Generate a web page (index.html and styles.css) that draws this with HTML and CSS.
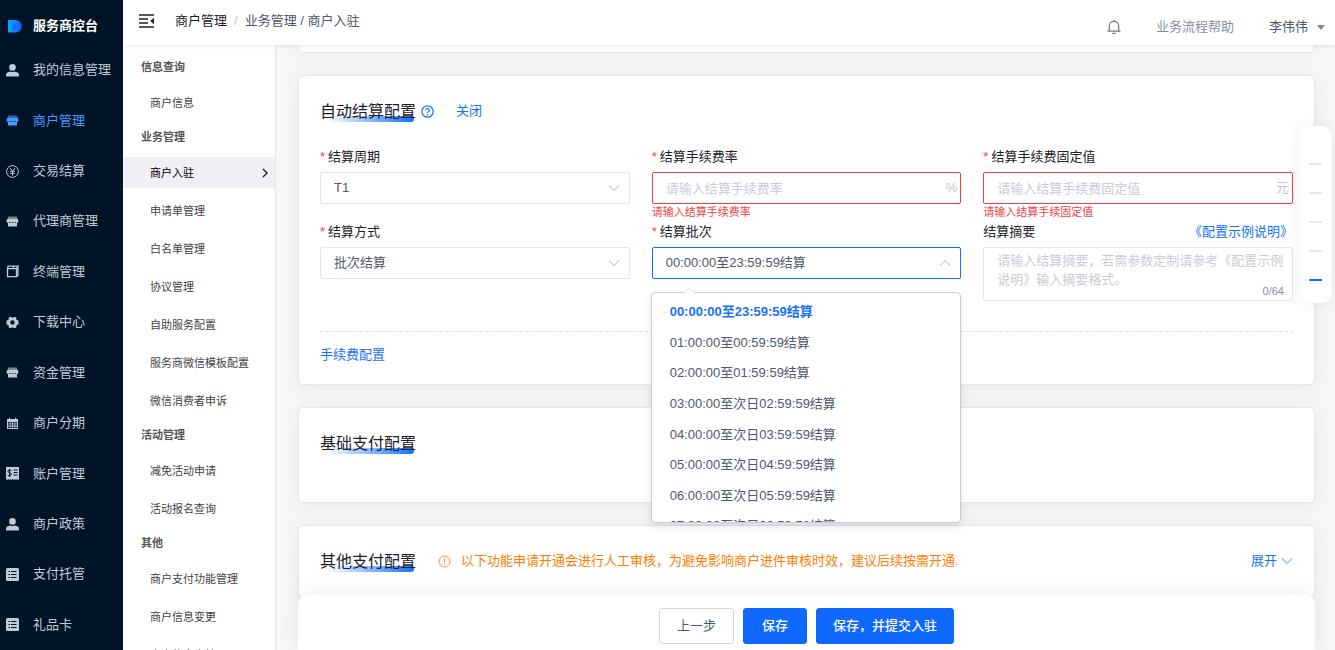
FILE: index.html
```html
<!DOCTYPE html>
<html lang="zh-CN">
<head>
<meta charset="utf-8">
<title>商户入驻 - 服务商控台</title>
<link rel="stylesheet" href="styles.css">
</head>
<body>
<svg class="sprite" aria-hidden="true">
  <symbol id="i-user" viewBox="0 0 13 13"><circle cx="6.500" cy="3.400" r="3.300"/><path d="M0 12.600V11C0 8.800 2 8 4.500 7.600Q6.500 8.600 8.500 7.600C11 8 13 8.800 13 11v1.600z"/></symbol>
  <symbol id="i-shop" viewBox="0 0 13 13"><path opacity=".6" d="M2 1.500h9v2H2z"/><path fill-rule="evenodd" d="M1.500 3.500h10l1 2.500v1l-1.500 1v3.500H2V8L.5 7V6zM3.300 7v1h1.200V7zm2.600 0v1h1.200V7zm2.600 0v1h1.200V7z"/></symbol>
  <symbol id="i-yen" viewBox="0 0 13 13"><g fill="none" stroke="currentColor"><circle cx="6.500" cy="6.500" r="5.900"/><path d="M4 3l2.500 3L9 3M6.500 6v4.500M4.200 6.300h4.600M4.200 8.300h4.600"/></g></symbol>
  <symbol id="i-box" viewBox="0 0 13 13"><path fill="none" stroke="currentColor" stroke-width="1.300" d="M1.500 3.700h9v8h-9zM1.500 3.700L2 1.200h10L10.500 3.700M12 1.200v9l-1.500 1.500M8 1.200L7 3.500"/></symbol>
  <symbol id="i-gear" viewBox="0 0 13 13"><path fill-rule="evenodd" d="M4.300.8L6.500 1.700 8.700.8l1.700 1-.2 1.700 2.300 1.300v3.400l-2.300 1.300.2 1.700-1.700 1-2.200-.9-2.200.9-1.700-1 .2-1.700L.5 8.200V4.800l2.300-1.300-.2-1.700zM6.500 4.200a2.300 2.300 0 1 0 0 4.600 2.300 2.300 0 0 0 0-4.600z"/></symbol>
  <symbol id="i-cal" viewBox="0 0 13 13"><path fill-rule="evenodd" d="M1 2h2V.8h1V2h5V.8h1V2h2v10H1zM2 5v1.400h1.700V5zm2.400 0v1.400H6V5zm2.400 0v1.400h1.700V5zm2.500 0v1.400H11V5zM2 7.200v1.400h1.700V7.200zm2.400 0v1.400H6V7.200zm2.400 0v1.400h1.700V7.200zm2.500 0v1.400H11V7.200zM2 9.500v1.400h1.700V9.500zm2.400 0v1.400H6V9.500zm2.400 0v1.400h1.700V9.500zm2.500 0v1.400H11V9.500z"/></symbol>
  <symbol id="i-bill" viewBox="0 0 13 13"><path d="M0 0h13v12l-1 1-1-1-1 1-1-1-1 1-1.500-1-1 1-1-1-1 1-1-1-1 1-1.500-1z"/><path fill="none" stroke="#001428" d="M5.500 3.700Q4.700 2.900 3.500 3 2 3.200 2 4.300t1.700 1.500T5.400 7.300 3.700 8.600 1.600 7.900M3.600 2v8M7.500 3h4M7.500 5.500h4M7.500 8h4"/></symbol>
  <symbol id="i-list" viewBox="0 0 13 13"><rect width="13" height="13" rx="1.500"/><path stroke="#001428" d="M2.500 3.500H4M5 3.500h5.500M2.500 6.500H4M5 6.500h5.500M2.500 9.500H4M5 9.500h5.500"/></symbol>
  <symbol id="i-down" viewBox="0 0 12 8"><path fill="none" stroke="currentColor" stroke-width="1.100" d="M1 1.500l5 5 5-5"/></symbol>
</svg>
<div class="app">
  <aside class="side">
    <div class="brand">
      <svg class="brand-logo" viewBox="0 0 14 13"><defs><linearGradient id="lg"><stop offset="0" stop-color="#0aa5ff"/><stop offset=".45" stop-color="#108cff"/><stop offset="1" stop-color="#1a4dff"/></linearGradient></defs><path fill="url(#lg)" d="M0 0h7.500a6.300 6.300 0 0 1 0 12.600H0z"/><path fill="#0a50ea" d="M4.500 3.200l4.500 3-4.500 6.400z" opacity=".55"/></svg>
      <span>服务商控台</span>
    </div>
    <nav class="side-nav" aria-label="主导航">
      <a href="#"><svg><use href="#i-user"/></svg>我的信息管理</a>
      <a href="#" class="on"><svg><use href="#i-shop"/></svg>商户管理</a>
      <a href="#"><svg><use href="#i-yen"/></svg>交易结算</a>
      <a href="#"><svg><use href="#i-shop"/></svg>代理商管理</a>
      <a href="#"><svg><use href="#i-box"/></svg>终端管理</a>
      <a href="#"><svg><use href="#i-gear"/></svg>下载中心</a>
      <a href="#"><svg><use href="#i-shop"/></svg>资金管理</a>
      <a href="#"><svg><use href="#i-cal"/></svg>商户分期</a>
      <a href="#"><svg><use href="#i-bill"/></svg>账户管理</a>
      <a href="#"><svg><use href="#i-user"/></svg>商户政策</a>
      <a href="#"><svg><use href="#i-list"/></svg>支付托管</a>
      <a href="#"><svg><use href="#i-list"/></svg>礼品卡</a>
    </nav>
  </aside>
  <div class="page">
    <header class="top">
      <button class="fold" type="button" aria-label="收起菜单"><svg viewBox="0 0 15 14"><path stroke="#1d2129" stroke-width="1.300" d="M0 1h15M0 5h9M0 9h9M0 13h15"/><path fill="#1d2129" d="M15 3.800v6.400L11.200 7z"/></svg></button>
      <nav class="crumbs" aria-label="面包屑"><a href="#">商户管理</a><i>/</i><span>业务管理 / 商户入驻</span></nav>
      <div class="tools">
        <button class="bell" type="button" aria-label="通知"><svg viewBox="0 0 14 14"><path fill="none" stroke="#777" stroke-width="1.200" d="M0.500 11.200h13M2.300 11V6a4.700 4.700 0 0 1 9.400 0v5M7 0v1.500M5.300 13.300h3.400"/></svg></button>
        <a class="help" href="#">业务流程帮助</a>
        <button class="who" type="button">李伟伟<svg viewBox="0 0 8 5"><path fill="#7d8592" d="M0 0h8L4 5z"/></svg></button>
      </div>
    </header>
    <div class="body">
      <nav class="sub" aria-label="商户管理">
        <h2>信息查询</h2>
        <a href="#">商户信息</a>
        <h2>业务管理</h2>
        <a href="#" class="on">商户入驻<svg viewBox="0 0 6 10"><path fill="none" stroke="#1d2129" stroke-width="1.400" d="M1 1l4 4-4 4"/></svg></a>
        <a href="#">申请单管理</a>
        <a href="#">白名单管理</a>
        <a href="#">协议管理</a>
        <a href="#">自助服务配置</a>
        <a href="#">服务商微信模板配置</a>
        <a href="#">微信消费者申诉</a>
        <h2>活动管理</h2>
        <a href="#">减免活动申请</a>
        <a href="#">活动报名查询</a>
        <h2>其他</h2>
        <a href="#">商户支付功能管理</a>
        <a href="#">商户信息变更</a>
        <a href="#">商户信息审核</a>
      </nav>
      <main class="main">
        <section class="card card-tail"></section>
        <section class="card">
          <div class="card-head">
            <h3>自动结算配置</h3>
            <svg class="q" viewBox="0 0 13 13"><g fill="none" stroke="#1670ff" stroke-width="1.200"><circle cx="6.500" cy="6.500" r="5.700"/><path d="M4.700 5.300a1.800 1.800 0 1 1 2.700 1.500q-.9.500-.9 1.200M6.500 9v1.200"/></g></svg>
            <a class="toggle" href="#">关闭</a>
          </div>
          <form class="form">
            <div class="item">
              <label for="cycle" class="req">结算周期</label>
              <div class="field"><select id="cycle"><option>T1</option></select><svg class="chev"><use href="#i-down"/></svg></div>
            </div>
            <div class="item">
              <label for="rate" class="req">结算手续费率</label>
              <div class="field bad"><input id="rate" type="text" placeholder="请输入结算手续费率"><span class="unit">%</span></div>
              <p class="err">请输入结算手续费率</p>
            </div>
            <div class="item">
              <label for="fixed" class="req">结算手续费固定值</label>
              <div class="field bad"><input id="fixed" type="text" placeholder="请输入结算手续费固定值"><span class="unit">元</span></div>
              <p class="err">请输入结算手续固定值</p>
            </div>
            <div class="item">
              <label for="mode" class="req">结算方式</label>
              <div class="field"><select id="mode"><option>批次结算</option></select><svg class="chev"><use href="#i-down"/></svg></div>
            </div>
            <div class="item">
              <label for="batch" class="req">结算批次</label>
              <div class="field open"><select id="batch"><option>00:00:00至23:59:59结算</option></select><svg class="chev"><use href="#i-down"/></svg></div>
              <div class="menu">
                <div class="menu-view">
                  <ul role="listbox" aria-label="结算批次">
                    <li role="option" aria-selected="true">00:00:00至23:59:59结算</li>
                    <li role="option">01:00:00至00:59:59结算</li>
                    <li role="option">02:00:00至01:59:59结算</li>
                    <li role="option">03:00:00至次日02:59:59结算</li>
                    <li role="option">04:00:00至次日03:59:59结算</li>
                    <li role="option">05:00:00至次日04:59:59结算</li>
                    <li role="option">06:00:00至次日05:59:59结算</li>
                    <li role="option">07:00:00至次日06:59:59结算</li>
                  </ul>
                </div>
              </div>
            </div>
            <div class="item">
              <div class="label-row"><label for="memo">结算摘要</label><a href="#">《配置示例说明》</a></div>
              <div class="field area"><textarea id="memo" rows="2" placeholder="请输入结算摘要，若需参数定制请参考《配置示例说明》输入摘要格式。"></textarea><span class="count">0/64</span></div>
            </div>
          </form>
          <div class="more"><a href="#">手续费配置</a></div>
        </section>
        <section class="card card-base">
          <div class="card-head"><h3>基础支付配置</h3></div>
        </section>
        <section class="card card-other">
          <div class="card-head">
            <h3>其他支付配置</h3>
            <p class="warn"><svg viewBox="0 0 13 13"><g fill="none" stroke="#ff8a3c"><circle cx="6.500" cy="6.500" r="5.500"/><path d="M6.500 3.300v4M6.500 8.500v1.200"/></g></svg>以下功能申请开通会进行人工审核，为避免影响商户进件审核时效，建议后续按需开通.</p>
            <a class="expand" href="#">展开<svg><use href="#i-down"/></svg></a>
          </div>
        </section>
        <footer class="bar">
          <button type="button" class="btn">上一步</button>
          <button type="button" class="btn primary">保存</button>
          <button type="button" class="btn primary">保存，并提交入驻</button>
        </footer>
        <nav class="anchors" aria-label="页内导航">
          <a href="#" aria-label="第1节"></a><a href="#" aria-label="第2节"></a><a href="#" aria-label="第3节"></a><a href="#" aria-label="第4节"></a><a href="#" class="on" aria-label="第5节"></a>
        </nav>
      </main>
    </div>
  </div>
</div>
</body>
</html>
```
FILE: styles.css
```css
* { box-sizing: border-box; }
body, h2, h3, p, ul { margin: 0; padding: 0; }
body { font: 13px/22px "Liberation Sans", "Noto Sans CJK SC", sans-serif; color: #1d2129; }
a { color: #1670ff; text-decoration: none; }
button, input, select, textarea { font: inherit; color: inherit; }
button { border: 0; padding: 0; background: none; cursor: pointer; }
svg { display: block; flex: none; }
.sprite { position: absolute; width: 0; height: 0; }

.app { display: flex; height: 100vh; overflow: hidden; }

.side { flex: none; width: 123px; display: flex; flex-direction: column; background: #001428; }
.brand { height: 45px; padding: 7px 0 0 8px; display: flex; align-items: center; gap: 11px; color: #fff; font-weight: 700; white-space: nowrap; }
.brand-logo { width: 14px; height: 13px; }
.side-nav { flex: 1; display: flex; flex-direction: column; }
.side-nav a { flex: 1; display: flex; align-items: center; gap: 14px; padding-left: 6px; color: #bfcbd9; white-space: nowrap; }
.side-nav svg { width: 13px; height: 13px; fill: currentColor; }
.side-nav .on { color: #409eff; }

.page { flex: 1; min-width: 0; display: flex; flex-direction: column; }
.top { position: relative; z-index: 20; flex: none; height: 45px; display: flex; padding: 0 10px 0 16px; background: #fff; box-shadow: 0 1px 4px rgba(0, 21, 41, .1); }
.fold, .crumbs { height: 42px; }
.fold svg { width: 15px; height: 14px; }
.crumbs { display: flex; align-items: center; margin-left: 21px; color: #4e5969; }
.crumbs a { color: #1d2129; }
.crumbs i { margin: 0 7px; color: #c0c4cc; font-style: normal; }
.tools { margin-left: auto; padding-top: 9px; display: flex; align-items: center; gap: 35px; }
.bell svg { width: 14px; height: 14px; }
.help { color: #86909c; }
.who { display: flex; align-items: center; gap: 9px; color: #4e5969; }
.who svg { width: 8px; height: 5px; }

.body { flex: 1; min-height: 0; display: flex; }
.sub { flex: none; width: 153px; padding-top: 10px; display: flex; flex-direction: column; gap: 7px; overflow: hidden; border-right: 1px solid #e5e6eb; background: #fff; font-size: 11px; }
.sub h2 { flex: none; padding-left: 18px; font-size: 11px; line-height: 25px; font-weight: 700; color: #555; }
.sub a { flex: none; display: flex; justify-content: space-between; align-items: center; height: 31px; padding: 0 7px 0 27px; color: #444; }
.sub .on { background: #f0eff5; color: #000; }
.sub svg { width: 6px; height: 10px; }

.main { position: relative; flex: 1; min-width: 0; display: flex; flex-direction: column; gap: 22px; padding: 0 20px 0 22px; overflow: hidden; background: #f7f7f7; }
.card { flex: none; padding: 25px 21px 18px; border: 1px solid #e5e6eb; border-radius: 5px; background: #fff; box-shadow: 0 2px 20px rgba(30, 50, 60, .08); }
.card-tail { padding: 7px 0 0; border-top: 0; border-radius: 0 0 5px 5px; }
.card-base { padding-bottom: 47px; }
.card-other { padding-bottom: 24px; }
.card-head { display: flex; align-items: flex-start; line-height: 20px; }
.card-head h3 { position: relative; z-index: 0; font-size: 16px; line-height: 22px; font-weight: 400; }
.card-head h3::after { content: ""; position: absolute; z-index: -1; left: 6px; right: 2px; bottom: 1px; height: 6px; border-radius: 0 2px 3px 0; background: linear-gradient(90deg, rgba(22, 112, 255, 0), #1670ff); }
.q { width: 13px; height: 13px; margin: 4px 0 0 5px; }
.toggle { margin-left: 22px; }

.form { display: grid; grid-template-columns: repeat(3, minmax(0, 1fr)); column-gap: 22px; margin-top: 22px; line-height: 24px; }
.item label { display: block; }
.item { position: relative; min-height: 75px; }
.req::before { content: "*"; margin-right: 3px; color: #f53f3f; }
.label-row { display: flex; justify-content: space-between; }
.field { position: relative; display: flex; align-items: center; height: 32px; margin-top: 3px; border: 1px solid #e5e6eb; border-radius: 2px; background: #fff; color: #4e5969; }
.field select, .field input { flex: 1; min-width: 0; height: 100%; padding: 0 13px; border: 0; outline: 0; background: none; appearance: none; }
.field ::placeholder { color: #c9cdd4; opacity: 1; }
.bad { border-color: #f53f3f; }
.open { border-color: #1670ff; }
.chev { position: absolute; right: 9px; width: 12px; height: 8px; color: #c9cdd4; pointer-events: none; }
.open .chev { transform: rotate(180deg); }
.unit { padding-right: 3px; color: #c0c4cc; }
.err { font-size: 11px; line-height: 16px; color: #f53f3f; }
.area { height: auto; }
.area textarea { flex: 1; min-width: 0; height: 52px; padding: 3px 6px 3px 13px; border: 0; outline: 0; line-height: 19px; resize: none; background: none; overflow: hidden; }
.count { position: absolute; right: 8px; bottom: 1px; font-size: 11px; line-height: 16px; color: #86909c; }

.menu { position: absolute; z-index: 5; top: 72px; left: -1px; right: 0; border: 1px solid #c9cdd4; border-radius: 4px; background: #fff; box-shadow: 0 4px 10px rgba(0, 0, 0, .1); }
.menu::before { content: ""; position: absolute; top: -4px; left: 33px; width: 8px; height: 8px; background: #fff; border: solid #e5e6eb; border-width: 1px 0 0 1px; transform: rotate(45deg); }
.menu-view { position: relative; height: 229px; padding-top: 4px; overflow: hidden; }
.menu ul { display: flex; flex-direction: column; height: 245px; list-style: none; line-height: 30px; }
.menu li { flex: 1; padding-left: 18px; color: #4e5969; }
.menu li[aria-selected] { color: #1670ff; font-weight: 700; }

.more { margin-top: 30px; padding-top: 12px; border-top: 1px dashed #e0e1e5; }
.warn { display: flex; align-items: center; gap: 10px; margin-left: 22px; color: #ff7d00; white-space: nowrap; }
.warn svg { width: 13px; height: 13px; }
.expand { display: flex; align-items: center; gap: 4px; margin-left: auto; }
.expand svg { width: 12px; height: 8px; color: #94b0ff; }

.bar { position: absolute; z-index: 10; left: 22px; right: 20px; bottom: 0; display: flex; justify-content: center; gap: 9px; padding: 13px 0 6px; border-radius: 10px 10px 0 0; background: #fff; box-shadow: 0 0 20px rgba(30, 50, 60, .1); }
.btn { min-width: 64px; height: 36px; padding: 0 17px; border: 1px solid #d5d8de; border-radius: 3px; background: #fff; color: #4e5969; }
.primary { padding: 0 16px; border-color: #1069ff; background: #1069ff; color: #fff; font-weight: 500; }

.anchors { position: absolute; z-index: 12; right: 3px; top: 81px; display: flex; flex-direction: column; gap: 27px; padding: 37px 10px 22px 9px; border-radius: 10px; background: #fff; box-shadow: 0 0 16px rgba(30, 50, 60, .08); }
.anchors a { width: 13px; height: 2px; background: #e5e6eb; }
.anchors .on { background: #1670ff; }
```
